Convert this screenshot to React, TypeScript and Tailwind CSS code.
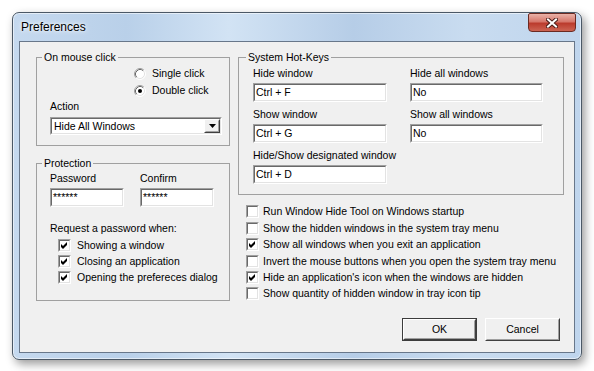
import React from 'react';

// classic 3D edges
const sunkenOuter = 'border border-t-[#a0a0a0] border-l-[#a0a0a0] border-b-white border-r-white';
const sunkenInner = 'border border-t-[#696969] border-l-[#696969] border-b-[#e3e3e3] border-r-[#e3e3e3] bg-white';

const Check = ({ on }: { on?: boolean }) => (
  <span className={`block w-[13px] h-[13px] shrink-0 ${sunkenOuter}`}>
    <span className={`block w-full h-full ${sunkenInner}`}>
      {on && (
        <svg width="9" height="9" viewBox="0 0 9 9" className="block">
          <path d="M1 3 L3 5 L7 1 L7 4 L3 8 L1 6 Z" fill="#000" />
        </svg>
      )}
    </span>
  </span>
);

const Radio = ({ on }: { on?: boolean }) => (
  <svg width="12" height="12" viewBox="0 0 12 12" className="shrink-0">
    <circle cx="6" cy="6" r="5" fill="#fff" />
    <path d="M2.11 9.89 A5.5 5.5 0 0 1 9.89 2.11" stroke="#a0a0a0" fill="none" />
    <path d="M9.89 2.11 A5.5 5.5 0 0 1 2.11 9.89" stroke="#ffffff" fill="none" />
    <path d="M2.82 9.18 A4.5 4.5 0 0 1 9.18 2.82" stroke="#696969" fill="none" />
    <path d="M9.18 2.82 A4.5 4.5 0 0 1 2.82 9.18" stroke="#e3e3e3" fill="none" />
    {on && <circle cx="6" cy="6" r="2" fill="#000" />}
  </svg>
);

const Field = ({ label, value, className }: { label: string; value: string; className?: string }) => (
  <div className={className}>
    <div className="whitespace-nowrap">{label}</div>
    <div className={`mt-[3px] h-[19px] ${sunkenOuter}`}>
      <div className={`h-full pl-[1px] flex items-center ${sunkenInner}`}>{value}</div>
    </div>
  </div>
);

const Button = ({ label, primary }: { label: string; primary?: boolean }) => (
  <div className={`w-[75px] h-[23px] ${primary ? 'border border-[#3c3c3c]' : ''}`}>
    <div className="h-full border border-t-white border-l-white border-b-[#404040] border-r-[#404040]">
      <div className="h-full flex items-center justify-center bg-[#f0f0f0] border border-t-[#f0f0f0] border-l-[#f0f0f0] border-b-[#a0a0a0] border-r-[#a0a0a0]">
        {label}
      </div>
    </div>
  </div>
);

const options = [
  { label: 'Run Window Hide Tool on Windows startup', on: false },
  { label: 'Show the hidden windows in the system tray menu', on: false },
  { label: 'Show all windows when you exit an application', on: true },
  { label: 'Invert the mouse buttons when you open the system tray menu', on: false },
  { label: "Hide an application's icon when the windows are hidden", on: true },
  { label: 'Show quantity of hidden window in tray icon tip', on: false },
];

export default function App() {
  return (
    <div className="w-[594px] h-[371px] bg-white pt-[12px] pl-[12px] font-['Liberation_Sans',Arial,sans-serif]">
      <div className="w-[570px] h-[348px] flex flex-col rounded-[7px] border border-[#4b5866] bg-[linear-gradient(90deg,#c5d9ef_0%,#b9d0e9_20%,#d2e3f4_38%,#b6cde7_60%,#c9dcf0_80%,#bfd5ed_100%)] shadow-[inset_0_0_0_1px_rgba(255,255,255,0.55),3px_4px_10px_rgba(0,0,0,0.4)]">
        {/* Title bar */}
        <div className="h-[28px] shrink-0 flex items-start">
          <span className="ml-[8px] mt-[7px] text-[12px] leading-[14px] text-black [text-shadow:0_0_6px_#fff,0_0_3px_#fff]">
            Preferences
          </span>
          <div className="ml-auto mr-[5px] w-[48px] h-[19px] flex items-center justify-center rounded-b-[4px] rounded-t-[2px] border border-[#6b2a22] bg-[linear-gradient(180deg,#eab2a8_0%,#d6776b_45%,#bb3b2d_55%,#cc6453_100%)]">
            <svg width="12" height="10" viewBox="0 0 12 10">
              <path d="M2 1.5 L10 8.5 M10 1.5 L2 8.5" stroke="#4a1d18" strokeWidth="4" strokeLinecap="square" />
              <path d="M2 1.5 L10 8.5 M10 1.5 L2 8.5" stroke="#fff" strokeWidth="2" strokeLinecap="square" />
            </svg>
          </div>
        </div>

        {/* Client area */}
        <div className="mx-[6px] mb-[6px] flex-1 flex flex-col border border-[#68778a] bg-[#f0f0f0] text-[10.5px] leading-[13px] text-black">
          <div className="flex">
            {/* Left column */}
            <div className="ml-[16px] mt-[9px] w-[194px] shrink-0">
              <fieldset className="h-[95px] border border-[#a0a0a0]">
                <legend className="ml-[5px] px-[2px] leading-[13px]">On mouse click</legend>
                <div className="mt-[1px] pl-[97px]">
                  <div className="h-[17px] flex items-center gap-[6px]">
                    <Radio />
                    <span>Single click</span>
                  </div>
                  <div className="h-[17px] flex items-center gap-[6px]">
                    <Radio on />
                    <span>Double click</span>
                  </div>
                </div>
                <div className="mt-[1px] pl-[13px]">Action</div>
                <div className={`mt-[4px] ml-[13px] w-[172px] h-[18px] ${sunkenOuter}`}>
                  <div className={`h-full flex items-center ${sunkenInner}`}>
                    <span className="pl-[2px] flex-1">Hide All Windows</span>
                    <div className="w-[16px] h-full border border-t-white border-l-white border-b-[#404040] border-r-[#404040]">
                      <div className="h-full flex items-center justify-center bg-[#f0f0f0] border border-t-[#f0f0f0] border-l-[#f0f0f0] border-b-[#a0a0a0] border-r-[#a0a0a0]">
                        <svg width="7" height="4" viewBox="0 0 7 4">
                          <path d="M0 0 H7 L3.5 4 Z" fill="#000" />
                        </svg>
                      </div>
                    </div>
                  </div>
                </div>
              </fieldset>

              <fieldset className="mt-[11px] h-[144px] border border-[#a0a0a0]">
                <legend className="ml-[5px] px-[2px] leading-[13px]">Protection</legend>
                <div className="mt-[2px] pl-[13px] flex gap-[16px]">
                  <Field label="Password" value="******" className="w-[74px]" />
                  <Field label="Confirm" value="******" className="w-[74px]" />
                </div>
                <div className="mt-[15px] pl-[13px]">Request a password when:</div>
                <div className="mt-[2px] pl-[21px]">
                  {['Showing a window', 'Closing an application', 'Opening the prefereces dialog'].map((t) => (
                    <div key={t} className="h-[16px] flex items-center gap-[6px]">
                      <Check on />
                      <span className="whitespace-nowrap">{t}</span>
                    </div>
                  ))}
                </div>
              </fieldset>
            </div>

            {/* Right column */}
            <div className="ml-[8px] mt-[9px] w-[326px] shrink-0">
              <fieldset className="h-[144px] border border-[#a0a0a0]">
                <legend className="ml-[7px] px-[2px] leading-[13px]">System Hot-Keys</legend>
                <div className="pt-[2.5px] pl-[14px] grid grid-cols-[134px_133px] gap-x-[23px] gap-y-[6px]">
                  <Field label="Hide window" value="Ctrl + F" />
                  <Field label="Hide all windows" value="No" />
                  <Field label="Show window" value="Ctrl + G" />
                  <Field label="Show all windows" value="No" />
                  <Field label="Hide/Show designated window" value="Ctrl + D" />
                </div>
              </fieldset>

              <div className="mt-[8.8px] pl-[8px]">
                {options.map((o) => (
                  <div key={o.label} className="h-[16.4px] flex items-center gap-[4px]">
                    <Check on={o.on} />
                    <span className="whitespace-nowrap">{o.label}</span>
                  </div>
                ))}
              </div>
            </div>
          </div>

          <div className="mt-auto mb-[11px] pr-[14px] flex justify-end gap-[8px]">
            <Button label="OK" primary />
            <Button label="Cancel" />
          </div>
        </div>
      </div>
    </div>
  );
}
